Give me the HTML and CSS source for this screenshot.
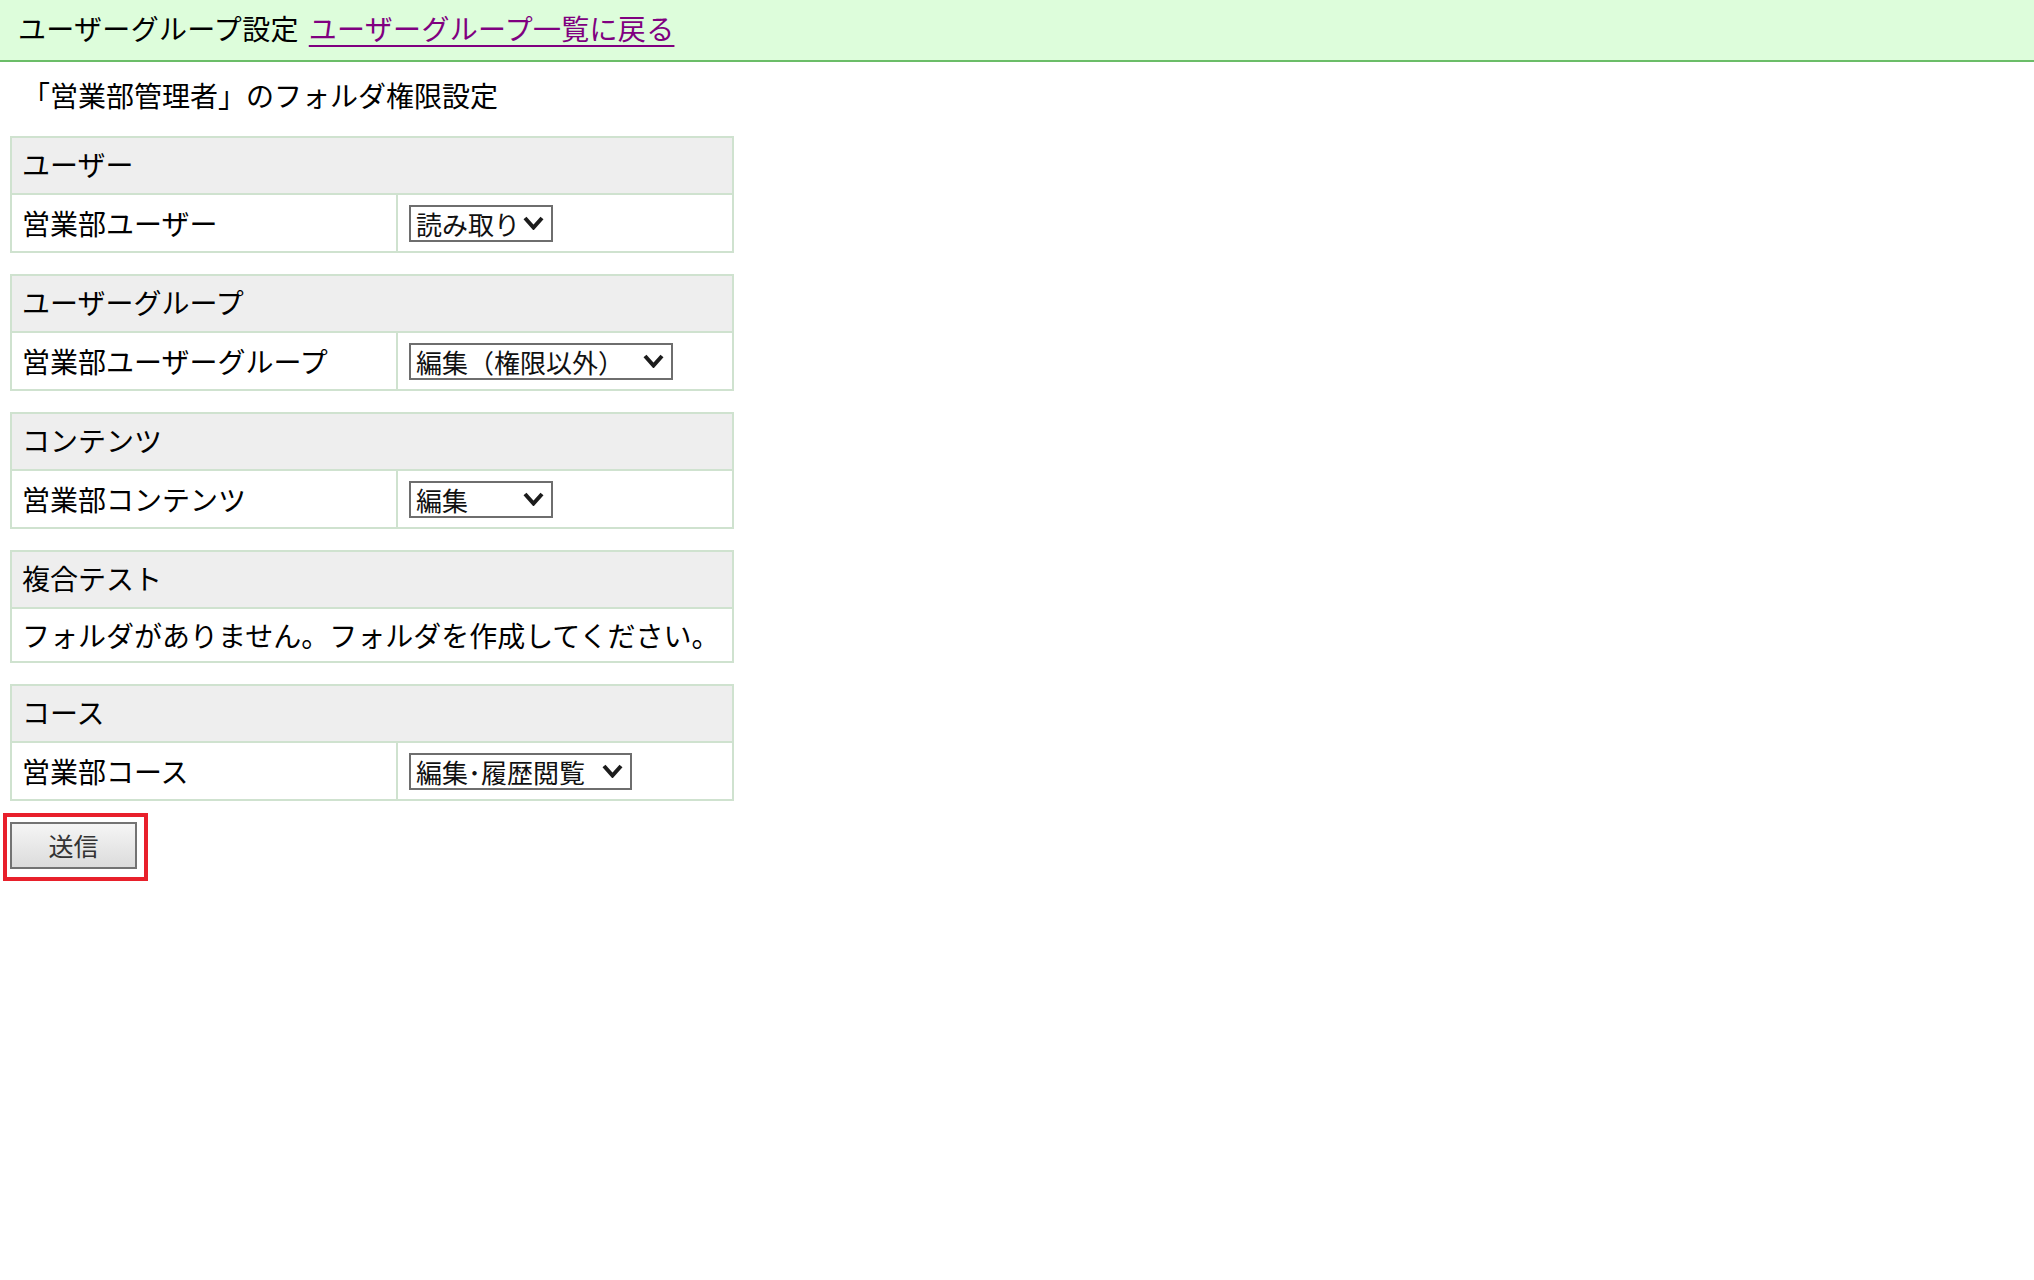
FILE: index.html
```html
<!DOCTYPE html>
<html lang="ja">
<head>
<meta charset="utf-8">
<title>ユーザーグループ設定</title>
<link rel="stylesheet" href="styles.css">
</head>
<body>
<div class="topbar">
  <span class="topbar-title">ユーザーグループ設定</span>
  <a class="topbar-link" href="#">ユーザーグループ一覧に戻る</a>
</div>
<div class="content">
  <h1 class="page-title">「営業部管理者」のフォルダ権限設定</h1>

  <div class="perm">
    <div class="perm-head">ユーザー</div>
    <div class="perm-row">
      <div class="perm-name">営業部ユーザー</div>
      <div class="perm-value">
        <span class="sel sel-s">
          <select><option>読み取り</option><option>なし</option><option>編集</option></select>
          <svg class="chev" viewBox="0 0 21 14" width="21" height="14"><polyline points="2,2 10.5,11.5 19,2"/></svg>
        </span>
      </div>
    </div>
  </div>

  <div class="perm">
    <div class="perm-head">ユーザーグループ</div>
    <div class="perm-row">
      <div class="perm-name">営業部ユーザーグループ</div>
      <div class="perm-value">
        <span class="sel sel-l">
          <select><option>編集（権限以外）</option><option>なし</option><option>読み取り</option></select>
          <svg class="chev" viewBox="0 0 21 14" width="21" height="14"><polyline points="2,2 10.5,11.5 19,2"/></svg>
        </span>
      </div>
    </div>
  </div>

  <div class="perm">
    <div class="perm-head">コンテンツ</div>
    <div class="perm-row">
      <div class="perm-name">営業部コンテンツ</div>
      <div class="perm-value">
        <span class="sel sel-s">
          <select><option>編集</option><option>なし</option><option>読み取り</option></select>
          <svg class="chev" viewBox="0 0 21 14" width="21" height="14"><polyline points="2,2 10.5,11.5 19,2"/></svg>
        </span>
      </div>
    </div>
  </div>

  <div class="perm">
    <div class="perm-head">複合テスト</div>
    <div class="perm-note">フォルダがありません。フォルダを作成してください。</div>
  </div>

  <div class="perm">
    <div class="perm-head">コース</div>
    <div class="perm-row">
      <div class="perm-name">営業部コース</div>
      <div class="perm-value">
        <span class="sel sel-m">
          <select><option>編集･履歴閲覧</option><option>なし</option><option>読み取り</option></select>
          <svg class="chev" viewBox="0 0 21 14" width="21" height="14"><polyline points="2,2 10.5,11.5 19,2"/></svg>
        </span>
      </div>
    </div>
  </div>

  <div class="submit-mark">
    <button class="submit-btn" type="button">送信</button>
  </div>
</div>
</body>
</html>
```

FILE: styles.css
```css
html, body {
  margin: 0;
  padding: 0;
  background: #ffffff;
}

body {
  font-family: "Noto Sans CJK JP", "Noto Sans", sans-serif;
  font-size: 28px;
  color: #000000;
}

.topbar {
  height: 62px;
  box-sizing: border-box;
  background: #ddfddb;
  border-bottom: 2px solid #6bbd68;
  display: flex;
  align-items: center;
  padding: 0 0 4px 18px;
  white-space: nowrap;
  line-height: 40px;
}

.topbar-title {
  margin-right: 10px;
  letter-spacing: 0.3px;
}

.topbar-link {
  color: #800080;
  letter-spacing: 0.3px;
  text-decoration: underline;
  text-decoration-thickness: 2px;
  text-underline-offset: 5px;
}

.content {
  padding: 0 10px;
}

.page-title {
  margin: 13px 0 21px 12px;
  font-size: 28px;
  font-weight: normal;
  line-height: 40px;
  white-space: nowrap;
}

.perm {
  width: 724px;
  box-sizing: border-box;
  border: 2px solid #cfe2cf;
  margin-bottom: 21px;
}

.perm-head {
  height: 57px;
  box-sizing: border-box;
  background: #eeeeee;
  border-bottom: 2px solid #cfe2cf;
  display: flex;
  align-items: center;
  padding: 0 0 3px 10px;
  line-height: 40px;
  white-space: nowrap;
}

.perm-row {
  display: grid;
  grid-template-columns: 386px 1fr;
  height: 56px;
}

.perm-name {
  border-right: 2px solid #cfe2cf;
  display: flex;
  align-items: center;
  padding: 0 0 0 10px;
  line-height: 40px;
  white-space: nowrap;
}

.perm-value {
  display: flex;
  align-items: center;
  padding-left: 11px;
}

.perm-note {
  height: 52px;
  display: flex;
  align-items: center;
  padding-left: 10px;
  line-height: 40px;
  white-space: nowrap;
}

.sel {
  display: inline-flex;
  align-items: center;
  height: 37px;
  box-sizing: border-box;
  border: 2px solid #6e6e6e;
  background: #ffffff;
}

.sel-s { width: 144px; }
.sel-l { width: 264px; }
.sel-m { width: 223px; }

.sel select {
  flex: 1;
  min-width: 0;
  height: 100%;
  appearance: none;
  -webkit-appearance: none;
  border: none;
  outline: none;
  background: transparent;
  font-family: "Noto Sans CJK JP", "Noto Sans", sans-serif;
  font-size: 26px;
  color: #111111;
  padding: 0 0 0 5px;
  margin: 0;
  line-height: 33px;
}

.chev {
  flex: none;
  margin: 0 7px 0 2px;
}

.chev polyline {
  fill: none;
  stroke: #1c1c1c;
  stroke-width: 4;
  stroke-linecap: butt;
  stroke-linejoin: miter;
}

.submit-mark {
  display: inline-block;
  border: 4px solid #e8202b;
  padding: 5px 7px 8px 3px;
  margin: -9px 0 0 -7px;
}

.submit-btn {
  display: block;
  width: 127px;
  height: 47px;
  box-sizing: border-box;
  border: 2px solid #737373;
  border-radius: 0;
  background: linear-gradient(#f5f5f5, #dcdcdc);
  font-family: "Noto Sans CJK JP", "Noto Sans", sans-serif;
  font-size: 25px;
  color: #333333;
  padding: 0 0 2px 0;
  margin: 0;
}
```
